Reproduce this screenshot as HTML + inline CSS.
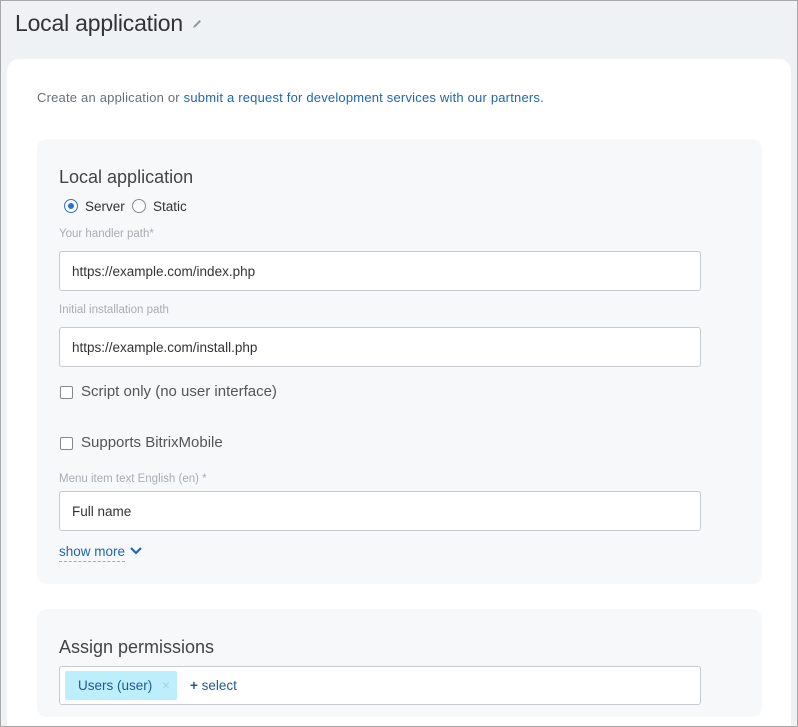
<!DOCTYPE html>
<html><head><meta charset="utf-8"><style>
*{box-sizing:border-box;margin:0;padding:0}
html{width:798px;height:727px;overflow:hidden}
body{width:798px;height:727px;overflow:hidden;font-family:"Liberation Sans",sans-serif;background:#eef2f4;position:relative}
.frame{position:absolute;left:0;top:0;width:798px;height:727px;border:1px solid #a8a8a8;pointer-events:none;z-index:5}
.abs{position:absolute;white-space:nowrap}
.title{left:15px;top:10px;font-size:23px;color:#333;letter-spacing:-0.2px}
.card{position:absolute;left:7px;top:59px;width:784px;height:668px;background:#fff;border-radius:12px 12px 0 0}
.sec{position:absolute;left:37px;width:725px;background:#f7f8fa;border-radius:10px}
.inp{position:absolute;left:59px;width:642px;height:40px;background:#fff;border:1px solid #c8ccd0;border-radius:3px;font-size:13.5px;color:#333;padding:12px 0 0 12px}
.lbl{font-size:11.5px;color:#a8adb2;left:59px}
.h{font-size:18px;color:#444;left:59px}
.cb{position:absolute;width:13px;height:13px;border:1.5px solid #888;border-radius:2px;background:#fff}
.cbt{font-size:15px;color:#555}
</style></head><body>
<div class="frame"></div>
<div class="abs title">Local application <svg width="12" height="12" viewBox="0 0 12 12" style="vertical-align:1px;margin-left:2px"><path d="M2 10 L3 7.5 L8.5 2 L10 3.5 L4.5 9 Z" fill="#999"/></svg></div>
<div class="card"></div>
<div class="abs" style="left:37px;top:90px;font-size:13px;color:#6a7075;letter-spacing:0.2px">Create an application or <span style="color:#2067b0">submit a request for development services with our partners.</span></div>
<div class="sec" style="top:139px;height:445px"></div>
<div class="abs h" style="top:167px">Local application</div>
<div class="abs" style="left:64px;top:199px;width:14px;height:14px;border-radius:50%;border:1.5px solid #2f6ed6;background:#fff"><div style="position:absolute;left:2.5px;top:2.5px;width:6px;height:6px;border-radius:50%;background:#2f6ed6"></div></div>
<div class="abs" style="left:85px;top:199px;font-size:13.5px;color:#333">Server</div>
<div class="abs" style="left:132px;top:199px;width:14px;height:14px;border-radius:50%;border:1.5px solid #888;background:#fff"></div>
<div class="abs" style="left:153px;top:199px;font-size:13.5px;color:#333">Static</div>
<div class="abs lbl" style="top:228px">Your handler path*</div>
<div class="inp" style="top:251px">https://example.com/index.php</div>
<div class="abs lbl" style="top:304px">Initial installation path</div>
<div class="inp" style="top:327px">https://example.com/install.php</div>
<div class="cb" style="left:60px;top:386px"></div>
<div class="abs cbt" style="left:81px;top:383px">Script only (no user interface)</div>
<div class="cb" style="left:60px;top:437px"></div>
<div class="abs cbt" style="left:81px;top:434px">Supports BitrixMobile</div>
<div class="abs lbl" style="top:473px">Menu item text English (en) *</div>
<div class="inp" style="top:491px">Full name</div>
<div class="abs" style="left:59px;top:544px;font-size:13.5px;color:#2067b0;border-bottom:1px dashed #8fb0d6;padding-bottom:2px">show more</div>
<svg class="abs" style="left:129px;top:546px" width="14" height="10" viewBox="0 0 14 10"><path d="M2 2 L7 7 L12 2" stroke="#2067b0" stroke-width="2.2" fill="none"/></svg>
<div class="sec" style="top:609px;height:108px"></div>
<div class="abs h" style="top:637px">Assign permissions</div>
<div class="inp" style="top:666px;height:39px;padding:0"></div>
<div class="abs" style="left:65px;top:671px;width:112px;height:29px;background:#bdeefc;border-radius:2px;font-size:13.5px;color:#1f5a94;padding:7px 0 0 13px">Users (user) <span style="color:#a9d3e2;margin-left:6px">×</span></div>
<div class="abs" style="left:190px;top:678px;font-size:13.5px;color:#1f5a94"><b>+</b> select</div>
</body></html>
